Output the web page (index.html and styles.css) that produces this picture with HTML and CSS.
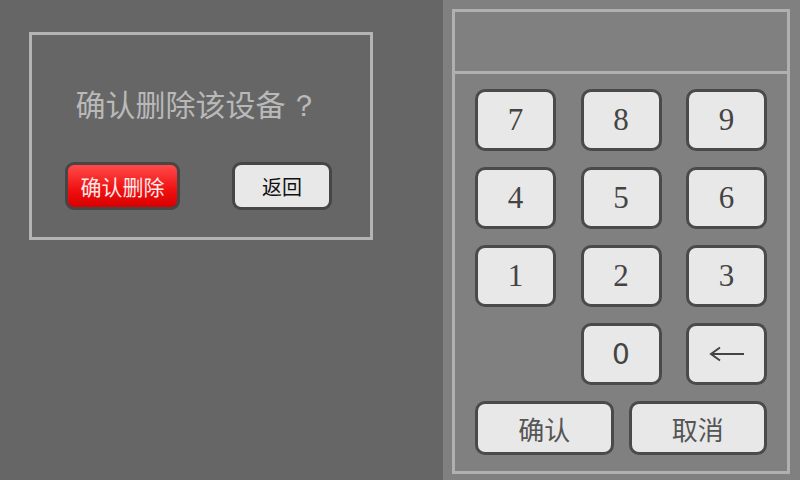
FILE: index.html
```html
<!DOCTYPE html>
<html>
<head>
<meta charset="utf-8">
<link rel="stylesheet" href="styles.css">
</head>
<body>
<div class="screen">
  <div class="left">
    <div class="dialog">
      <div class="title">确认删除该设备<span class="qmark">？</span></div>
      <div class="actions">
        <div class="btn btn-danger">确认删除</div>
        <div class="btn btn-plain">返回</div>
      </div>
    </div>
  </div>
  <div class="right">
    <div class="panel">
      <div class="display"></div>
      <div class="keypad">
        <div class="grid">
          <div class="key digit">7</div>
          <div class="key digit">8</div>
          <div class="key digit">9</div>
          <div class="key digit">4</div>
          <div class="key digit">5</div>
          <div class="key digit">6</div>
          <div class="key digit">1</div>
          <div class="key digit">2</div>
          <div class="key digit">3</div>
          <div class="empty"></div>
          <div class="key zero">0</div>
          <div class="key">
            <svg width="36" height="16" viewBox="0 0 36 16"><path d="M2 8 H35 M11 1.5 L2 8 L11 14.5" fill="none" stroke="#444" stroke-width="2"/></svg>
          </div>
        </div>
        <div class="bottom">
          <div class="key wide">确认</div>
          <div class="key wide">取消</div>
        </div>
      </div>
    </div>
  </div>
</div>
</body>
</html>
```

FILE: styles.css
```css
html, body {
  margin: 0;
  padding: 0;
}
body {
  width: 800px;
  height: 480px;
  overflow: hidden;
  font-family: "Noto Sans CJK SC", "Noto Sans", sans-serif;
}
.screen {
  display: flex;
  width: 800px;
  height: 480px;
}
.left {
  width: 443px;
  height: 480px;
  background: #666666;
  padding: 32px 0 0 29px;
  box-sizing: border-box;
}
.dialog {
  width: 344px;
  height: 208px;
  border: 3px solid #b4b4b4;
  box-sizing: border-box;
  display: flex;
  flex-direction: column;
}
.title {
  margin-top: 53px;
  height: 30px;
  display: flex;
  justify-content: center;
  align-items: baseline;
  padding-right: 8px;
  font-size: 30px;
  line-height: 30px;
  color: #b9b9b9;
}
.qmark {
  font-family: "Liberation Serif", serif;
  margin-left: 3px;
}
.actions {
  display: flex;
  gap: 52px;
  margin-top: 44px;
  padding-left: 33px;
}
.btn {
  height: 48px;
  box-sizing: border-box;
  border: 3px solid #464646;
  border-radius: 9px;
  display: flex;
  align-items: center;
  justify-content: center;
  font-size: 21px;
}
.btn-danger {
  width: 115px;
  background: linear-gradient(#ff4a4a, #f01010 60%, #d80000);
  color: #ffe8e8;
}
.btn-plain {
  width: 100px;
  background: #e8e8e8;
  color: #111;
  font-size: 20px;
}
.right {
  flex: 1;
  background: #808080;
  padding: 9px 10px 6px 9px;
  box-sizing: border-box;
  height: 480px;
}
.panel {
  height: 100%;
  border: 3px solid #b0b0b0;
  box-sizing: border-box;
  display: flex;
  flex-direction: column;
}
.display {
  height: 59px;
  border-bottom: 3px solid #b0b0b0;
}
.keypad {
  padding: 15px 20px 0 20px;
  display: flex;
  flex-direction: column;
  gap: 16px;
}
.grid {
  display: grid;
  grid-template-columns: 81px 81px 81px;
  grid-auto-rows: 62px;
  justify-content: space-between;
  row-gap: 16px;
}
.key {
  box-sizing: border-box;
  background: #e8e8e8;
  border: 3px solid #4a4a4a;
  border-radius: 10px;
  display: flex;
  align-items: center;
  justify-content: center;
  color: #444;
}
.digit {
  font-family: "Liberation Serif", serif;
  font-size: 31px;
}
.zero {
  font-family: "DejaVu Sans", sans-serif;
  font-size: 28px;
}
.bottom {
  display: flex;
  gap: 15px;
  height: 54px;
}
.wide {
  flex: 1;
  font-size: 26px;
  color: #555;
}
```
